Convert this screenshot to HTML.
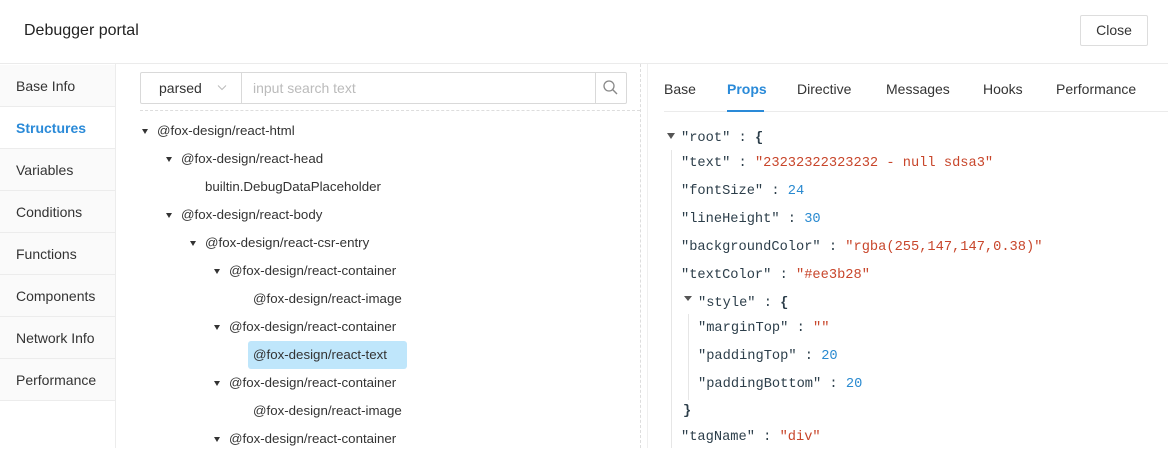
<!DOCTYPE html>
<html><head><meta charset="utf-8"><style>
*{box-sizing:border-box;margin:0;padding:0}
body{width:1168px;height:448px;overflow:hidden;background:#fff;font-family:"Liberation Sans",sans-serif;color:#222;position:relative;font-size:14px}
.a{position:absolute;white-space:nowrap}
.side div{position:absolute;left:0;width:115px;height:42px;line-height:42px;padding-left:16px;background:#fafafa;border-bottom:1px solid #ececec;font-size:14px;color:#333}
.tr{position:absolute;font-size:13.3px;color:#333;line-height:20px}
.tri{position:absolute;width:0;height:0;border-left:3.5px solid transparent;border-right:3.5px solid transparent;border-top:5px solid #333}
.m{position:absolute;font-family:"Liberation Mono",monospace;font-size:13.7px;color:#2c3e4a;white-space:pre;line-height:18px}
.s{color:#c8462b}.n{color:#2a8ad0}.b{font-weight:bold}
.tab{position:absolute;top:81px;font-size:14px;color:#333}
</style></head><body>
<div class="a" style="left:24px;top:22px;font-size:16px;color:#222">Debugger portal</div>
<div class="a" style="left:1080px;top:15px;width:68px;height:31px;border:1px solid #ddd;border-radius:2px;text-align:center;line-height:29px;font-size:14px;color:#333">Close</div>
<div class="a" style="left:0;top:63px;width:1168px;height:1px;background:#ebebeb"></div>
<div class="side">
<div style="top:65px">Base Info</div>
<div style="top:107px;background:#fff;color:#2a8ad8;font-weight:bold">Structures</div>
<div style="top:149px">Variables</div>
<div style="top:191px">Conditions</div>
<div style="top:233px">Functions</div>
<div style="top:275px">Components</div>
<div style="top:317px">Network Info</div>
<div style="top:359px">Performance</div>
</div>
<div class="a" style="left:115px;top:64px;width:1px;height:384px;background:#ececec"></div>
<div class="a" style="left:140px;top:72px;width:487px;height:32px;border:1px solid #d9d9d9;border-radius:2px"></div>
<div class="a" style="left:241px;top:72px;width:1px;height:32px;background:#d9d9d9"></div>
<div class="a" style="left:595px;top:72px;width:1px;height:32px;background:#d9d9d9"></div>
<div class="a" style="left:159px;top:80px;font-size:14px;color:#333">parsed</div>
<svg class="a" style="left:217px;top:84px" width="10" height="8"><path d="M1 1.5 L5 5.5 L9 1.5" fill="none" stroke="#bbb" stroke-width="1"/></svg>
<div class="a" style="left:253px;top:80px;font-size:14px;color:#bbb">input search text</div>
<svg class="a" style="left:602px;top:79px" width="18" height="18"><circle cx="7" cy="7" r="5" fill="none" stroke="#888" stroke-width="1.3"/><path d="M10.8 10.8 L15 15" stroke="#888" stroke-width="1.4"/></svg>
<div class="a" style="left:140px;top:110px;width:500px;border-top:1px dashed #ddd"></div>
<div class="a" style="left:640px;top:64px;height:384px;border-left:1px dashed #ddd"></div>
<div class="a" style="left:647px;top:64px;width:1px;height:384px;background:#efefef"></div>

<div class="tri" style="left:142px;top:129px"></div><div class="tr" style="left:157px;top:121px">@fox-design/react-html</div>
<div class="tri" style="left:166px;top:157px"></div><div class="tr" style="left:181px;top:149px">@fox-design/react-head</div>
<div class="tr" style="left:205px;top:177px">builtin.DebugDataPlaceholder</div>
<div class="tri" style="left:166px;top:213px"></div><div class="tr" style="left:181px;top:205px">@fox-design/react-body</div>
<div class="tri" style="left:190px;top:241px"></div><div class="tr" style="left:205px;top:233px">@fox-design/react-csr-entry</div>
<div class="tri" style="left:214px;top:269px"></div><div class="tr" style="left:229px;top:261px">@fox-design/react-container</div>
<div class="tr" style="left:253px;top:289px">@fox-design/react-image</div>
<div class="tri" style="left:214px;top:325px"></div><div class="tr" style="left:229px;top:317px">@fox-design/react-container</div>
<div class="a" style="left:248px;top:341px;width:159px;height:28px;background:#bfe6fb;border-radius:3px"></div>
<div class="tr" style="left:253px;top:345px">@fox-design/react-text</div>
<div class="tri" style="left:214px;top:381px"></div><div class="tr" style="left:229px;top:373px">@fox-design/react-container</div>
<div class="tr" style="left:253px;top:401px">@fox-design/react-image</div>
<div class="tri" style="left:214px;top:437px"></div><div class="tr" style="left:229px;top:429px">@fox-design/react-container</div>

<div class="tab" style="left:664px">Base</div>
<div class="tab" style="left:727px;color:#2a8ad8;font-weight:bold">Props</div>
<div class="tab" style="left:797px">Directive</div>
<div class="tab" style="left:886px">Messages</div>
<div class="tab" style="left:983px">Hooks</div>
<div class="tab" style="left:1056px">Performance</div>
<div class="a" style="left:664px;top:111px;width:504px;height:1px;background:#ebebeb"></div>
<div class="a" style="left:727px;top:110px;width:37px;height:2px;background:#2a8ad8"></div>

<div class="a" style="left:667px;top:133px;width:0;height:0;border-left:4.5px solid transparent;border-right:4.5px solid transparent;border-top:6px solid #555"></div>
<div class="a" style="left:671px;top:150px;width:1px;height:298px;background:#e6e6e6"></div>
<div class="m" style="left:681px;top:130px">"root" : <span class="b">{</span></div>
<div class="m" style="left:681px;top:155px">"text" : <span class="s">"23232322323232 - null sdsa3"</span></div>
<div class="m" style="left:681px;top:183px">"fontSize" : <span class="n">24</span></div>
<div class="m" style="left:681px;top:211px">"lineHeight" : <span class="n">30</span></div>
<div class="m" style="left:681px;top:239px">"backgroundColor" : <span class="s">"rgba(255,147,147,0.38)"</span></div>
<div class="m" style="left:681px;top:267px">"textColor" : <span class="s">"#ee3b28"</span></div>
<div class="a" style="left:684px;top:296px;width:0;height:0;border-left:4px solid transparent;border-right:4px solid transparent;border-top:5px solid #555"></div>
<div class="m" style="left:698px;top:295px">"style" : <span class="b">{</span></div>
<div class="a" style="left:688px;top:314px;width:1px;height:86px;background:#e6e6e6"></div>
<div class="m" style="left:698px;top:320px">"marginTop" : <span class="s">""</span></div>
<div class="m" style="left:698px;top:348px">"paddingTop" : <span class="n">20</span></div>
<div class="m" style="left:698px;top:376px">"paddingBottom" : <span class="n">20</span></div>
<div class="m b" style="left:683px;top:403px">}</div>
<div class="m" style="left:681px;top:429px">"tagName" : <span class="s">"div"</span></div>
</body></html>
